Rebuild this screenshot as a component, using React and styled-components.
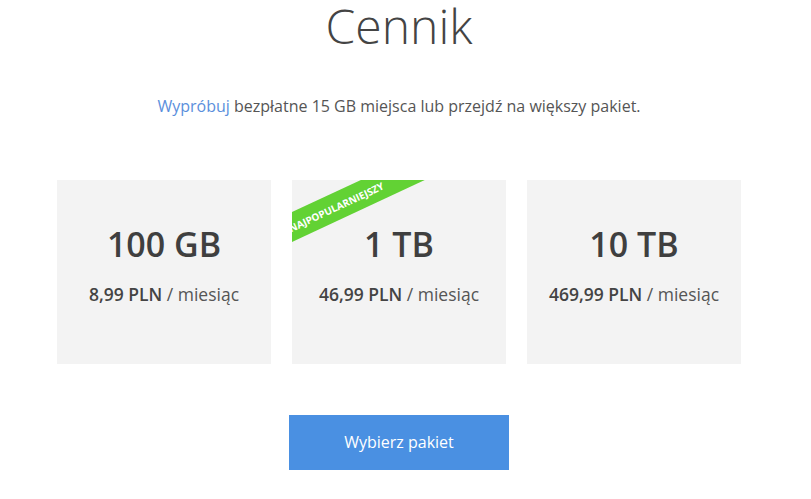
import React from 'react'
import styled, { createGlobalStyle } from 'styled-components'

const GlobalStyle = createGlobalStyle`
    body {
        margin: 0;
        background: #ffffff;
        font-family: "Open Sans", "Liberation Sans", sans-serif;
    }
`

const Page = styled.div`
    width: 798px;
    display: flex;
    flex-direction: column;
    align-items: center;
`
const Title = styled.h1`
    margin: 0;
    font-size: 48px;
    line-height: 1.1;
    font-weight: 300;
    color: #444444;
`
const Lead = styled.p`
    margin: 41px 0 0;
    font-size: 16px;
    line-height: 24px;
    color: #555555;
`
const Link = styled.a`
    color: #5b8fdc;
    text-decoration: none;
`
const Plans = styled.div`
    margin-top: 62px;
    display: flex;
    gap: 21px;
`
const Card = styled.div`
    position: relative;
    overflow: hidden;
    width: 214px;
    height: 184px;
    box-sizing: border-box;
    padding-top: 44px;
    background: #f3f3f3;
    display: flex;
    flex-direction: column;
    align-items: center;
    gap: 17px;
`
const Size = styled.div`
    font-size: 34px;
    line-height: 1.2;
    font-weight: 600;
    color: #3f3f3f;
`
const Price = styled.div`
    font-size: 17.5px;
    line-height: 24px;
    font-weight: 600;
    color: #444444;
`
const Per = styled.span`
    font-weight: 400;
    color: #555555;
`
const Ribbon = styled.div`
    position: absolute;
    left: -56px;
    top: 13px;
    width: 200px;
    height: 27px;
    background: #62d234;
    color: #ffffff;
    font-size: 10px;
    font-weight: 700;
    display: flex;
    align-items: center;
    justify-content: center;
    transform: rotate(-25deg);
`
const Button = styled.button`
    margin-top: 51px;
    width: 220px;
    height: 55px;
    border: none;
    background: #4a90e2;
    color: #ffffff;
    font-family: inherit;
    font-size: 16px;
    cursor: pointer;
`

const plans = [
    { size: '100 GB', price: '8,99 PLN' },
    { size: '1 TB', price: '46,99 PLN', popular: true },
    { size: '10 TB', price: '469,99 PLN' },
]

export default function App() {
    return (
        <Page>
            <GlobalStyle />
            <Title>Cennik</Title>
            <Lead>
                <Link href="#">Wypróbuj</Link> bezpłatne 15 GB miejsca lub przejdź na większy pakiet.
            </Lead>
            <Plans>
                {plans.map(p => (
                    <Card key={p.size}>
                        {p.popular && <Ribbon>NAJPOPULARNIEJSZY</Ribbon>}
                        <Size>{p.size}</Size>
                        <Price>{p.price} <Per>/ miesiąc</Per></Price>
                    </Card>
                ))}
            </Plans>
            <Button>Wybierz pakiet</Button>
        </Page>
    )
}
